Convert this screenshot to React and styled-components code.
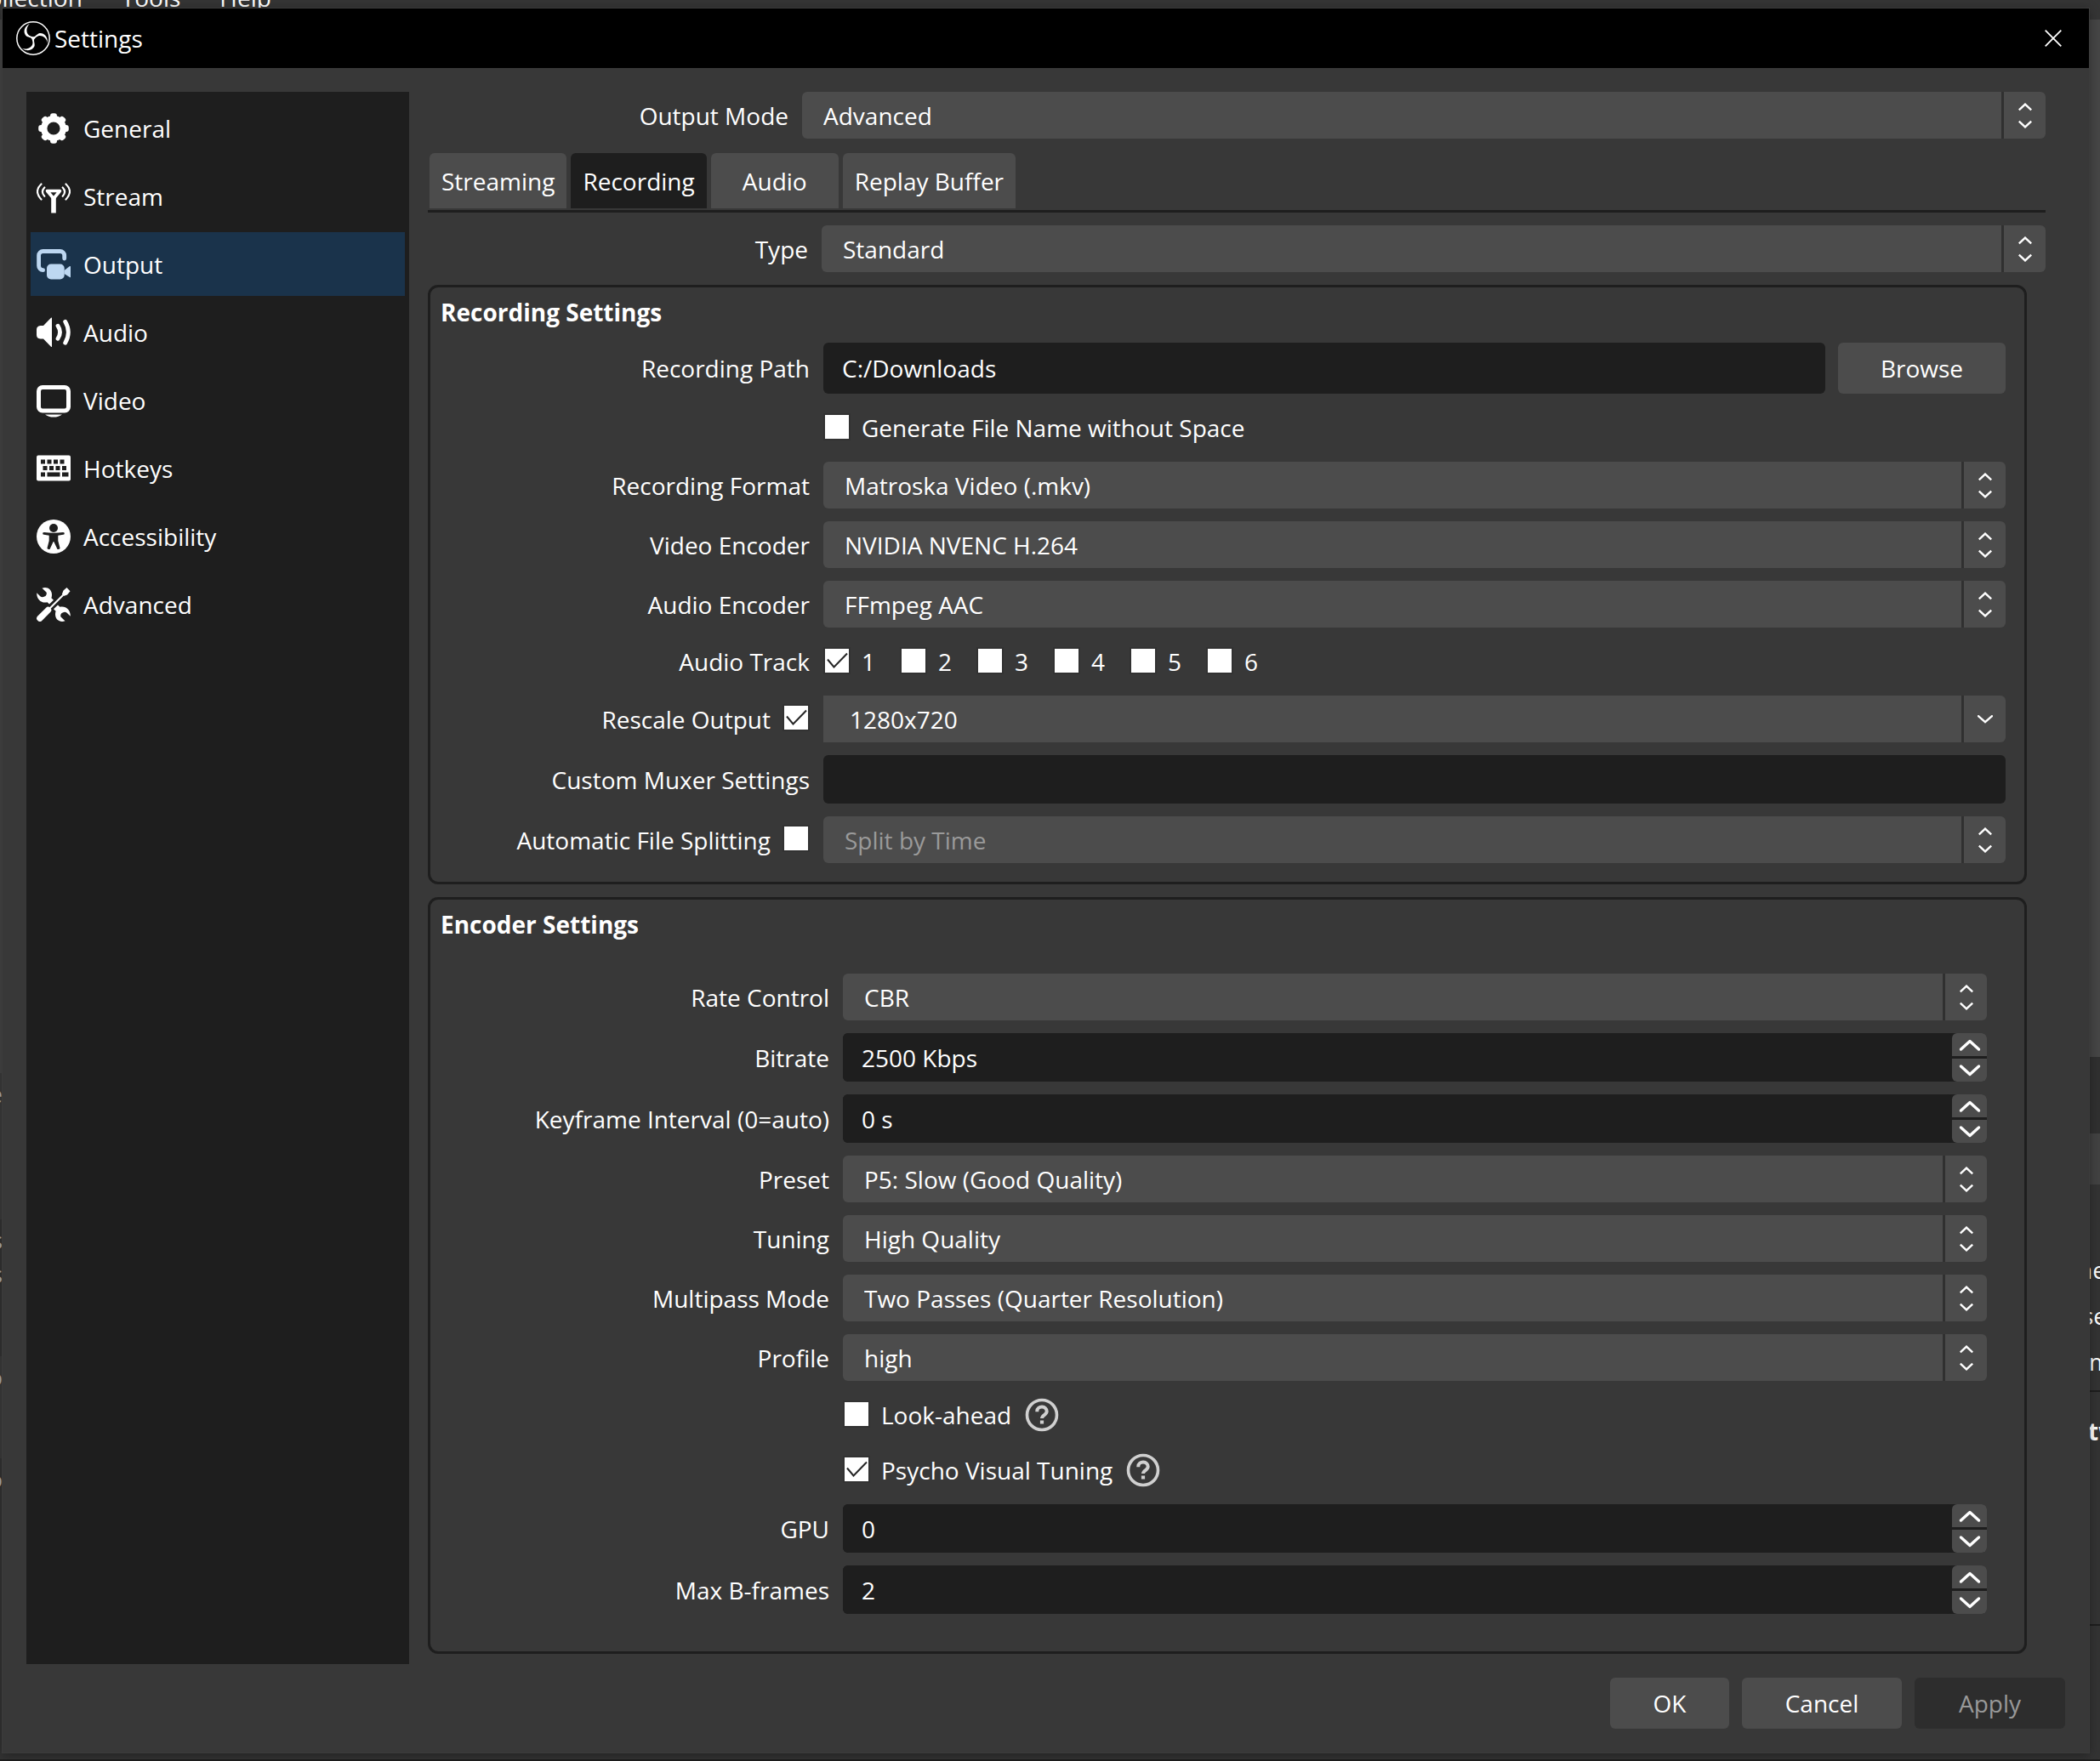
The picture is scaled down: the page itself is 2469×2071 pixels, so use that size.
import styled, { createGlobalStyle } from 'styled-components'

const GlobalStyle = createGlobalStyle`
  * {
    box-sizing: border-box;
  }

  body {
    margin: 0;
    background: #333333;
    color: #ffffff;
    font-family: 'Open Sans', 'Segoe UI', sans-serif;
    font-size: 28px;
    line-height: 40px;
  }

  button, input, select {
    font: inherit;
    color: inherit;
    border: none;
    margin: 0;
  }
`

/* ---------- icons ---------- */

const ObsLogo = () => (
  <svg width="40" height="40" viewBox="-20 -20 40 40" aria-hidden="true">
    <circle r="19.2" fill="none" stroke="#fff" strokeWidth="1.5" />
    {[0, 120, 240].map(angle => (
      <path
        key={angle}
        transform={`rotate(${angle})`}
        fill="#fff"
        d="M-3.5-17.5C-11-14-12-7-8.500-3C-6-1-2.500-1.500-1 1.500L1.200-1C-1-2.500-4-2-5.500-4C-8.500-7-8.500-13.500-3.500-17.500Z"
      />
    ))}
  </svg>
)

const GearIcon = () => (
  <svg width="40" height="40" viewBox="0 0 40 40" aria-hidden="true">
    <circle cx="20" cy="20" r="11.3" fill="none" stroke="currentColor" strokeWidth="7.4" />
    {[0, 45, 90, 135, 180, 225, 270, 315].map(angle => (
      <rect key={angle} x="16" y="2.200" width="8" height="9" rx="3" fill="currentColor" transform={`rotate(${angle} 20 20)`} />
    ))}
  </svg>
)

const AntennaIcon = () => (
  <svg width="40" height="40" viewBox="0 0 40 40" fill="none" stroke="currentColor" aria-hidden="true">
    <path d="M12.500 13.500H27.500L20 22.500Z" strokeWidth="3.600" strokeLinejoin="round" />
    <path d="M20 22V39.500" strokeWidth="5.600" />
    <path d="M5.500 5.500Q-3.500 14 5.500 23.500M9.300 9.500Q4.500 14.500 9.300 19.800M34.500 5.500Q43.500 14 34.500 23.500M30.700 9.500Q35.500 14.500 30.700 19.800" strokeWidth="2.200" strokeLinecap="round" />
  </svg>
)

const OutputIcon = () => (
  <svg width="40" height="40" viewBox="0 0 40 40" aria-hidden="true">
    <path d="M32.700 13V9.500a5 5 0 0 0-5-5H7.600a5 5 0 0 0-5 5V21.500a5 5 0 0 0 5 5.200" fill="none" stroke="currentColor" strokeWidth="4.800" strokeLinecap="round" />
    <rect x="12" y="19.500" width="20.700" height="18" rx="5" fill="currentColor" />
    <path d="M32.500 27L39 22q1-.4 1 1v11.500q0 1.200-1 .6L32.500 31Z" fill="currentColor" />
  </svg>
)

const SpeakerIcon = () => (
  <svg width="40" height="40" viewBox="0 0 40 40" aria-hidden="true">
    <path d="M4.500 12H8L17 2.800Q18 2 18 3V36.500Q18 37.500 17 36.700L8 27.500H4.500Q0 27 0 23V16.500Q0 12.500 4.500 12Z" fill="currentColor" />
    <path d="M25 12.200Q30 19.700 25 27.300M33.700 7.200Q41 19.700 33.700 32.200" fill="none" stroke="currentColor" strokeWidth="4.800" strokeLinecap="round" />
  </svg>
)

const MonitorIcon = () => (
  <svg width="40" height="40" viewBox="0 0 40 40" aria-hidden="true">
    <rect x="2.500" y="4.500" width="35" height="27.500" rx="4.500" fill="none" stroke="currentColor" strokeWidth="5" />
    <path d="M10 36.500H30Q26 39.600 20 39.600T10 36.500Z" fill="currentColor" />
  </svg>
)

const KeyboardIcon = () => (
  <svg width="40" height="40" viewBox="0 0 40 40" aria-hidden="true">
    <rect y="4.500" width="40" height="30" rx="2" fill="currentColor" />
    <path
      fill="#1e1e1e"
      d="M5 9.500h5v5h-5zM12.500 9.500h5v5h-5zM20 9.500h5v5h-5zM27.500 9.500h5v5h-5zM7.500 17h5v5h-5zM15 17h5v5h-5zM22.500 17h5v5h-5zM30 17h5v5h-5zM5 24.500h5v5h-5zM12.500 24.500h15v5h-15zM30 24.500h7.500v5h-7.500z"
    />
  </svg>
)

const PersonIcon = () => (
  <svg width="40" height="40" viewBox="0 0 40 40" aria-hidden="true">
    <circle cx="20" cy="20" r="20" fill="currentColor" />
    <circle cx="20" cy="10" r="5" fill="#1e1e1e" />
    <path fill="#1e1e1e" d="M9 15Q20 16.600 31 15q1.900 0 1.800 1.400t-1.500 1.400L25.300 18.800V25L27.500 33.500q0 1.200-1.500 1.500h-1.500L20.300 26h-.6L15.500 35H14q-1.500-.3-1.500-1.500L14.700 25V18.800L8.700 17.800q-1.400 0-1.500-1.400T9 15Z" />
  </svg>
)

const WRENCH = 'M6.500.8C12-1.500 18 2 18 8.500Q18 10.500 17.400 12.200L20 14.800L15 19.500L12.600 17.200C6 19 0 14 .2 6.300L4.300 10.200Q6 11.500 8 11L10.500 10Q12.500 7.500 11.500 5.500Z'

const ToolsIcon = () => (
  <svg width="40" height="40" viewBox="0 0 40 40" aria-hidden="true">
    <path d={WRENCH} fill="currentColor" />
    <path d={WRENCH} fill="currentColor" transform="rotate(180 20 20)" />
    <path d="M3.800 36.200L14.500 25.500" stroke="#1e1e1e" strokeWidth="10" />
    <path d="M15 25L31 9" stroke="#1e1e1e" strokeWidth="4.500" />
    <path d="M3.900 36.100L13.500 26.500" stroke="currentColor" strokeWidth="7.400" strokeLinecap="round" />
    <path d="M14 26L31 9" stroke="currentColor" strokeWidth="2.200" />
    <path d="M29.800 8L31.500 3.500L35.500 0L39.500 4.200L36 8.500L31.800 10Z" fill="currentColor" />
  </svg>
)

const CloseIcon = () => (
  <svg width="20" height="20" viewBox="0 0 20 20" aria-hidden="true">
    <path d="M.7.7L19.300 19.300M19.300.7L.7 19.300" stroke="#fff" strokeWidth="1.800" />
  </svg>
)

const UpDownIcon = () => (
  <svg width="16" height="30" viewBox="0 0 16 30" fill="none" stroke="#ffffff" strokeWidth="2.400" aria-hidden="true">
    <path d="M.8 8.300L8 1.600L15.200 8.300M.8 21.700L8 28.400L15.200 21.700" />
  </svg>
)

const DownIcon = () => (
  <svg width="18" height="10" viewBox="0 0 18 10" fill="none" stroke="#fff" strokeWidth="2.400" aria-hidden="true">
    <path d="M1 1.200L9 8.200L17 1.200" strokeLinecap="round" />
  </svg>
)

const SpinArrow = ({ down }) => (
  <svg width="26" height="16" viewBox="0 0 26 16" fill="none" stroke="#fff" strokeWidth="3.400" strokeLinecap="round" strokeLinejoin="round" aria-hidden="true">
    <path d={down ? 'M2.500 3L13 12.500L23.500 3' : 'M2.500 13L13 3.500L23.500 13'} />
  </svg>
)

const HelpIcon = () => (
  <svg width="40" height="40" viewBox="0 0 40 40" fill="none" stroke="#d0d0d0" role="img" aria-label="Help">
    <circle cx="20" cy="20" r="17.500" strokeWidth="3.600" />
    <path d="M14.300 16.200V15.500A5.700 5.200 0 0 1 25.700 15.800C25.700 20 20 20 20 24" strokeWidth="4" />
    <path d="M20 26.500V30.500" strokeWidth="4.200" />
  </svg>
)

/* ---------- data ---------- */

const menu = [
  { name: 'General', icon: <GearIcon /> },
  { name: 'Stream', icon: <AntennaIcon /> },
  { name: 'Output', icon: <OutputIcon />, active: true },
  { name: 'Audio', icon: <SpeakerIcon /> },
  { name: 'Video', icon: <MonitorIcon /> },
  { name: 'Hotkeys', icon: <KeyboardIcon /> },
  { name: 'Accessibility', icon: <PersonIcon /> },
  { name: 'Advanced', icon: <ToolsIcon /> },
]

const tabs = ['Streaming', 'Recording', 'Audio', 'Replay Buffer']

/* ---------- form parts ---------- */

const Select = ({ id, label, value, editable, disabled }) => (
  <SelectBox $square={editable}>
    <SelectInput id={id} aria-label={label} defaultValue={value} disabled={disabled} $wide={editable}>
      <option>{value}</option>
    </SelectInput>
    <SelectArrow>{editable ? <DownIcon /> : <UpDownIcon />}</SelectArrow>
  </SelectBox>
)

const Check = ({ id, checked }) => (
  <CheckBox>
    <CheckInput type="checkbox" id={id} defaultChecked={checked} />
    <CheckMark viewBox="0 0 32 32" aria-hidden="true">
      <path d="M5 14.500L12.500 23.500L28 7.500" fill="none" stroke="#262626" strokeWidth="2" />
    </CheckMark>
  </CheckBox>
)

const SelectRow = ({ id, label, value, disabled }) => (
  <Row>
    <Label htmlFor={id}>{label}</Label>
    <Select id={id} value={value} disabled={disabled} />
  </Row>
)

const SpinRow = ({ id, label, value }) => (
  <Row>
    <Label htmlFor={id}>{label}</Label>
    <SpinBox>
      <TextInput id={id} type="text" defaultValue={value} />
      <SpinButtons>
        <SpinButton type="button" aria-label={`Increase ${label}`}><SpinArrow /></SpinButton>
        <SpinButton type="button" aria-label={`Decrease ${label}`}><SpinArrow down /></SpinButton>
      </SpinButtons>
    </SpinBox>
  </Row>
)

const MainWindow = () => (
  <Backdrop aria-hidden="true">
    <MenuBar>
      <span>Collection</span>
      <span>Tools</span>
      <span>Help</span>
    </MenuBar>
    <BackdropBody>
      <LeftEdge>
        <Panel $h={1239} $bg="#464646" />
        <Panel $h={172} $bg="#3c3c3c">e</Panel>
        <Panel $h={40}>s</Panel>
        <Panel $h={121}>s</Panel>
        <Panel $h={120} $bg="#3c3c3c">o</Panel>
        <Panel $h={224}>o</Panel>
      </LeftEdge>
      <RightEdge>
        <Panel $h={1220} $bg="#464646" />
        <Panel $h={90} $bg="#303030" />
        <Panel $h={60} $bg="#424242" />
        <Panel $h={76} />
        <Panel $h={54}>ne</Panel>
        <Panel $h={54} $indent={5}>se</Panel>
        <Panel $h={60} $indent={13} $line>m</Panel>
        <Panel $h={22} />
        <Panel $h={253} $indent={12} $line $bold>tw</Panel>
      </RightEdge>
    </BackdropBody>
  </Backdrop>
)

const App = () => {
  return (
    <Page>
      <GlobalStyle />
      <MainWindow />

      <Dialog role="dialog" aria-labelledby="dialog-title">
        <TitleBar>
          <ObsLogo />
          <Title id="dialog-title">Settings</Title>
          <CloseButton type="button" aria-label="Close"><CloseIcon /></CloseButton>
        </TitleBar>

        <Body>
          <Sidebar>
            {menu.map(item => (
              <MenuItem key={item.name} type="button" $active={item.active}>
                {item.icon}
                {item.name}
              </MenuItem>
            ))}
          </Sidebar>

          <Content>
            <ModeRow>
              <Label htmlFor="mode">Output Mode</Label>
              <Select id="mode" value="Advanced" />
            </ModeRow>

            <Tabs role="tablist">
              {tabs.map(tab => (
                <Tab key={tab} type="button" role="tab" aria-selected={tab === 'Recording'} $active={tab === 'Recording'}>
                  {tab}
                </Tab>
              ))}
            </Tabs>

            <TypeRow>
              <Label htmlFor="type">Type</Label>
              <Select id="type" value="Standard" />
            </TypeRow>

            <Group>
              <GroupTitle>Recording Settings</GroupTitle>
              <Fields>
                <Row>
                  <Label htmlFor="path">Recording Path</Label>
                  <PathBox>
                    <TextInput id="path" type="text" defaultValue="C:/Downloads" $tall />
                    <Button type="button" $w={197}>Browse</Button>
                  </PathBox>
                </Row>
                <CheckRow>
                  <Check id="nospace" />
                  <label htmlFor="nospace">Generate File Name without Space</label>
                </CheckRow>
                <SelectRow id="format" label="Recording Format" value="Matroska Video (.mkv)" />
                <SelectRow id="vencoder" label="Video Encoder" value="NVIDIA NVENC H.264" />
                <SelectRow id="aencoder" label="Audio Encoder" value="FFmpeg AAC" />
                <Row>
                  <Label as="span">Audio Track</Label>
                  <Tracks>
                    {[1, 2, 3, 4, 5, 6].map(n => (
                      <Track key={n}>
                        <Check id={`track${n}`} checked={n === 1} />
                        <label htmlFor={`track${n}`}>{n}</label>
                      </Track>
                    ))}
                  </Tracks>
                </Row>
                <Row>
                  <LabelWithCheck>
                    <label htmlFor="rescale">Rescale Output</label>
                    <Check id="rescale" checked />
                  </LabelWithCheck>
                  <Select label="Rescale Output" value="1280x720" editable />
                </Row>
                <Row>
                  <Label htmlFor="muxer">Custom Muxer Settings</Label>
                  <TextInput id="muxer" type="text" />
                </Row>
                <Row>
                  <LabelWithCheck>
                    <label htmlFor="splitting">Automatic File Splitting</label>
                    <Check id="splitting" />
                  </LabelWithCheck>
                  <Select label="Automatic File Splitting" value="Split by Time" disabled />
                </Row>
              </Fields>
            </Group>

            <Group>
              <GroupTitle>Encoder Settings</GroupTitle>
              <EncoderFields>
                <SelectRow id="rate" label="Rate Control" value="CBR" />
                <SpinRow id="bitrate" label="Bitrate" value="2500 Kbps" />
                <SpinRow id="keyframe" label="Keyframe Interval (0=auto)" value="0 s" />
                <SelectRow id="preset" label="Preset" value="P5: Slow (Good Quality)" />
                <SelectRow id="tuning" label="Tuning" value="High Quality" />
                <SelectRow id="multipass" label="Multipass Mode" value="Two Passes (Quarter Resolution)" />
                <SelectRow id="profile" label="Profile" value="high" />
                <CheckRow>
                  <Check id="lookahead" />
                  <label htmlFor="lookahead">Look-ahead</label>
                  <HelpIcon />
                </CheckRow>
                <CheckRow>
                  <Check id="psycho" checked />
                  <label htmlFor="psycho">Psycho Visual Tuning</label>
                  <HelpIcon />
                </CheckRow>
                <SpinRow id="gpu" label="GPU" value="0" />
                <SpinRow id="bframes" label="Max B-frames" value="2" />
              </EncoderFields>
            </Group>
          </Content>
        </Body>

        <Footer>
          <Button type="button" $w={140}>OK</Button>
          <Button type="button" $w={188}>Cancel</Button>
          <Button type="button" $w={177} disabled>Apply</Button>
        </Footer>
      </Dialog>
    </Page>
  )
}

export default App


const Page = styled.div`
  position: relative;
  min-height: 100vh;
  padding: 10px 13px 10px 3px;
  overflow: hidden;
`

const Backdrop = styled.div`
  position: absolute;
  inset: 0;
  overflow: hidden;
  border-bottom: 2px solid #1e1e1e;
`

const MenuBar = styled.div`
  display: flex;
  gap: 46px;
  height: 23px;
  background: #353535;

  span {
    margin-top: -23px;
  }

  span:first-child {
    margin-left: -32px;
  }
`

const BackdropBody = styled.div`
  display: flex;
  justify-content: space-between;
`

const LeftEdge = styled.div`
  width: 3px;
  overflow: hidden;
  display: flex;
  flex-direction: column;
  color: #b0b0b0;
  direction: rtl;
`

const RightEdge = styled.div`
  width: 26px;
  overflow: hidden;
  display: flex;
  flex-direction: column;
`

const Panel = styled.div`
  height: ${({ $h }) => $h}px;
  background: ${({ $bg }) => $bg || '#333333'};
  border-bottom: ${({ $line }) => ($line ? '2px solid #1e1e1e' : 'none')};
  font-weight: ${({ $bold }) => ($bold ? 700 : 400)};
  padding: 4px 0 0 ${({ $indent }) => $indent || 0}px;
`

const Dialog = styled.div`
  position: relative;
  min-height: calc(100vh - 20px);
  display: flex;
  flex-direction: column;
  background: #383838;
  box-shadow: 0 0 0 1px #3c3c3c, 0 2px 12px rgba(0, 0, 0, 0.4);
`

const TitleBar = styled.header`
  display: flex;
  align-items: center;
  height: 70px;
  padding: 0 16px;
  background: #000000;
`

const Title = styled.h1`
  flex: 1;
  margin: 0 0 0 5px;
  font-size: 28px;
  font-weight: 400;
`

const CloseButton = styled.button`
  display: flex;
  padding: 16px;
  background: none;
`

const Body = styled.div`
  flex: 1;
  display: flex;
  padding: 28px 51px 0 28px;
`

const Sidebar = styled.nav`
  flex: 0 0 450px;
  display: flex;
  flex-direction: column;
  gap: 5px;
  padding: 5px;
  margin-right: 22px;
  background: #1e1e1e;
`

const MenuItem = styled.button`
  display: flex;
  align-items: center;
  gap: 15px;
  height: 75px;
  padding: 0 7px;
  text-align: left;
  background: ${({ $active }) => ($active ? '#1a334b' : 'transparent')};

  svg {
    color: ${({ $active }) => ($active ? '#bdd7f1' : '#ffffff')};
  }
`

const Content = styled.main`
  flex: 1;
  min-width: 0;
  padding-bottom: 12px;
`

const Row = styled.div`
  display: grid;
  grid-template-columns: 434px 1fr;
  column-gap: 16px;
  align-items: center;
`

const ModeRow = styled(Row)`
  grid-template-columns: 424px 1fr;
`

const TypeRow = styled(Row)`
  grid-template-columns: 447px 1fr;
  margin: 15px 0;
`

const Label = styled.label`
  text-align: right;
  white-space: nowrap;
`

const LabelWithCheck = styled.div`
  display: flex;
  justify-content: flex-end;
  align-items: center;
  gap: 14px;
  white-space: nowrap;
`

const Tabs = styled.div`
  display: flex;
  gap: 5px;
  margin-top: 17px;
  padding: 0 2px 2px;
  border-bottom: 3px solid #1e1e1e;
`

const Tab = styled.button`
  height: 65px;
  min-width: 150px;
  padding: 0 14px;
  border-radius: 6px 6px 0 0;
  background: ${({ $active }) => ($active ? '#1e1e1e' : '#4c4c4c')};
`

const Group = styled.section`
  margin: 0 22px 15px 0;
  padding: 9px 22px 22px 12px;
  border: 3px solid #1e1e1e;
  border-radius: 12px;

  &:last-child {
    margin-bottom: 0;
  }
`

const GroupTitle = styled.h2`
  margin: 0 0 16px;
  font-size: 28px;
  line-height: 40px;
  font-weight: 700;
`

const Fields = styled.div`
  display: flex;
  flex-direction: column;
  gap: 15px;
`

const EncoderFields = styled(Fields)`
  padding: 22px 22px 22px 23px;
`

const SelectBox = styled.div`
  display: grid;
  grid-template-columns: 1fr 52px;
  height: 55px;
  overflow: hidden;
  background: #4c4c4c;
  border-radius: ${({ $square }) => ($square ? '0 6px 6px 0' : '6px')};
`

const SelectInput = styled.select`
  grid-area: 1 / 1 / 2 / 3;
  appearance: none;
  outline: none;
  width: 100%;
  background: transparent;
  padding: 0 60px 0 ${({ $wide }) => ($wide ? 31 : 25)}px;

  &:disabled {
    color: #9a9a9a;
    opacity: 1;
  }
`

const SelectArrow = styled.span`
  grid-area: 1 / 2;
  display: flex;
  align-items: center;
  justify-content: center;
  border-left: 3px solid #303030;
  pointer-events: none;
`

const TextInput = styled.input`
  width: 100%;
  min-width: 0;
  height: ${({ $tall }) => ($tall ? 60 : 57)}px;
  padding: 0 22px;
  outline: none;
  border-radius: 6px;
  background: #1e1e1e;
`

const PathBox = styled.div`
  display: flex;
  gap: 15px;
`

const Button = styled.button`
  flex: none;
  min-width: ${({ $w }) => $w}px;
  height: 60px;
  border-radius: 6px;
  background: #4c4c4c;

  &:disabled {
    background: #2d2d2d;
    color: #999999;
  }
`

const SpinBox = styled.div`
  display: flex;
  border-radius: 6px;
  background: #1e1e1e;
`

const SpinButtons = styled.div`
  flex: 0 0 41px;
  display: flex;
  flex-direction: column;
  gap: 3px;
`

const SpinButton = styled.button`
  flex: 1;
  display: flex;
  align-items: center;
  justify-content: center;
  padding: 0;
  background: #4c4c4c;
  border-radius: 6px 6px 0 0;

  &:last-child {
    border-radius: 0 0 6px 6px;
  }
`

const CheckRow = styled.div`
  display: flex;
  align-items: center;
  height: 50px;
  padding-left: 450px;

  label {
    margin: 0 16px 0 13px;
  }
`

const CheckBox = styled.span`
  display: grid;
  width: 32px;
  height: 32px;
  margin-bottom: 3px;
`

const CheckMark = styled.svg`
  grid-area: 1 / 1;
  display: none;
  pointer-events: none;
`

const CheckInput = styled.input`
  grid-area: 1 / 1;
  appearance: none;
  background: #ffffff;

  && {
    border: 2px solid #323232;
  }

  &:checked + ${CheckMark} {
    display: block;
  }
`

const Tracks = styled.div`
  display: flex;
  height: 50px;
`

const Track = styled.span`
  display: flex;
  align-items: center;
  gap: 13px;
  width: 90px;
`

const Footer = styled.footer`
  display: flex;
  justify-content: flex-end;
  gap: 15px;
  padding: 16px 28px 28px;
`
